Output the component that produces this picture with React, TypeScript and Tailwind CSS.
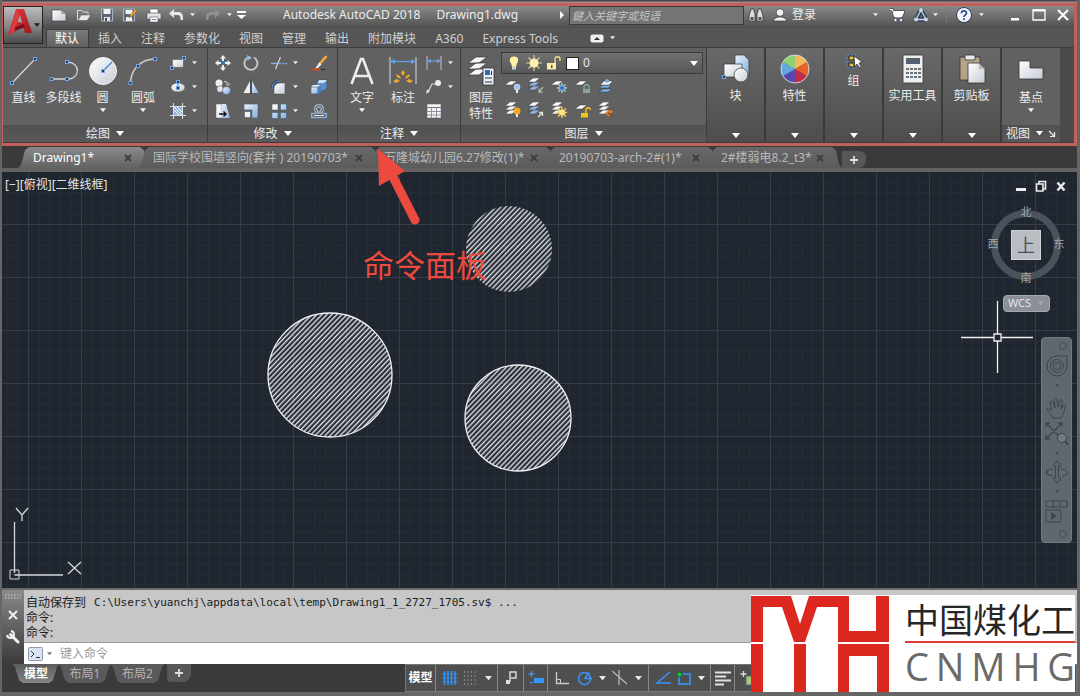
// src/App.tsx
import React from 'react';

type IconProps = { children: React.ReactNode; w?: number; h?: number; className?: string };

const Icon: React.FC<IconProps> = ({ children, w = 16, h = 16, className = '' }) => (
  <svg width={w} height={h} viewBox={`0 0 ${w} ${h}`} fill="none" aria-hidden="true" className={`shrink-0 ${className}`}>
    {children}
  </svg>
);

// Small triangle used by every drop-down
const Caret = ({ size = 6, className = 'text-[#e8e8e8]' }: { size?: number; className?: string }) => (
  <svg width={size} height={size / 2 + 1} viewBox="0 0 8 5" fill="currentColor" aria-hidden="true" className={`shrink-0 ${className}`}>
    <path d="M0 0h8L4 5z" />
  </svg>
);

const Grip = ({ x, y }: { x: number; y: number }) => (
  <rect x={x - 1.5} y={y - 1.5} width="3" height="3" fill="#2d3a4d" stroke="#6fa8ee" />
);

const Gradients = () => (
  <svg width="0" height="0" className="absolute" aria-hidden="true">
    <defs>
      <linearGradient id="paper" x1="0" y1="0" x2="1" y2="1">
        <stop offset="0" stopColor="#ffffff" />
        <stop offset="1" stopColor="#c5cbd6" />
      </linearGradient>
      <linearGradient id="steel" x1="0" y1="0" x2="1" y2="1">
        <stop offset="0" stopColor="#e9f1fb" />
        <stop offset="1" stopColor="#86aede" />
      </linearGradient>
      <linearGradient id="logoRed" x1="0" y1="0" x2="1" y2="1">
        <stop offset="0" stopColor="#e23b3f" />
        <stop offset="1" stopColor="#a1161d" />
      </linearGradient>
    </defs>
  </svg>
);

/* ---------- title bar ---------- */

const quickAccess = [
  {
    label: '新建',
    width: 'w-[25px]',
    icon: <Icon><path d="M1 3h9l5 4v7H1z" fill="url(#paper)" stroke="#333" strokeWidth=".6" /><path d="M10 3v4h5" fill="#aaa" /></Icon>,
  },
  {
    label: '打开',
    width: 'w-[23px]',
    icon: <Icon><path d="M1.500 13V3.500h4l1.500 1.500h5v3" stroke="#ddd" fill="#777" /><path d="M2 13.500 5 8h10l-4 5.500z" fill="#e8e8e8" stroke="#555" strokeWidth=".5" /></Icon>,
  },
  {
    label: '保存',
    width: 'w-[23px]',
    icon: <Icon><path d="M2.500 2h11v12h-11z" fill="#5b6676" stroke="#aab4c2" /><path d="M4.500 2h7v5h-7z" fill="#f3f3f3" /><path d="M5 10h6v4H5z" fill="#e6e6e6" /><path d="M6 11h2v3H6z" fill="#445" /></Icon>,
  },
  {
    label: '另存为',
    width: 'w-[24px]',
    icon: <Icon><path d="M1.500 2h11v12h-11z" fill="#5b6676" stroke="#aab4c2" /><path d="M3.500 3h7v4h-7zM4 10h6v4H4z" fill="#f3f3f3" /><path d="m7 11 1-3 6-6 1.500 1.500-6 6z" fill="#f0a93a" stroke="#754a12" strokeWidth=".5" /></Icon>,
  },
  {
    label: '打印',
    width: 'w-[22px]',
    icon: <Icon><path d="M4 2h8v5H4z" fill="#fff" stroke="#555" strokeWidth=".6" /><path d="M1 6h14v6H1z" fill="#dfe3ea" stroke="#4a4a4a" strokeWidth=".6" /><path d="M4 10h8v5H4z" fill="#fff" stroke="#555" strokeWidth=".6" /><path d="M5.500 12.500h5" stroke="#6f8fbd" /></Icon>,
  },
];

const UndoIcon = ({ className = '' }) => (
  <Icon className={className}>
    <path d="M6 2 1 6.500 6 11V8h3c2.500 0 3.500 1 3.500 3v2H15v-3c0-3.500-2-5-5-5H6z" fill="currentColor" />
  </Icon>
);

const TitleBar = () => (
  <header className="flex h-[22px] items-center bg-gradient-to-b from-[#8a8a8a] via-[#6d6d6d] to-[#4e4e4e] pb-1 pl-12 pr-1 text-xs text-[#ececec]">
    <div className="flex items-center">
      {quickAccess.map((q) => (
        <button key={q.label} type="button" aria-label={q.label} className={`flex ${q.width}`}>{q.icon}</button>
      ))}
      <button type="button" aria-label="放弃" className="flex w-[37px] items-center gap-1.5"><UndoIcon className="text-[#e6e6e6]" /><Caret size={5} /></button>
      <button type="button" aria-label="重做" className="flex w-8 items-center gap-1.5"><UndoIcon className="-scale-x-100 text-[#8f8f8f]" /><Caret size={5} /></button>
      <button type="button" aria-label="自定义快速访问工具栏" className="flex">
        <Icon w={10} h={9}><path d="M0 0h9v2H0zM0 4h9L4.500 8z" fill="#fff" /></Icon>
      </button>
    </div>
    <h1 className="ml-9 flex flex-1 gap-4 whitespace-nowrap">
      <span>Autodesk AutoCAD 2018</span>
      <span>Drawing1.dwg</span>
    </h1>
    <button type="button" aria-label="展开搜索" className="mr-1 flex"><Icon w={6} h={8}><path d="M1 0v8l4-4z" fill="#fff" /></Icon></button>
    <input
      aria-label="搜索"
      placeholder="鍵入关键字或短语"
      className="h-[19px] w-[175px] border border-[#3a3a3a] bg-[#747474] px-0.5 text-[11px] italic placeholder:text-[#c4c4c4]"
    />
    <div className="flex w-[326px] items-center">
      <button type="button" aria-label="查找" className="ml-1 flex w-6">
        <Icon><path d="M3 2h3v3l1 1v8H1V9zM13 2h-3v3L9 6v8h6V9z" fill="#dcdcdc" stroke="#333" strokeWidth=".8" /><path d="M7 7h2v3H7z" fill="#555" /><path d="M2.500 10h3v3h-3zM10.500 10h3v3h-3z" fill="#555" /></Icon>
      </button>
      <button type="button" className="flex items-center gap-1">
        <Icon><circle cx="8" cy="5.500" r="3.800" fill="#f2f2f2" stroke="#333" strokeWidth=".7" /><path d="M1.500 14c0-2.500 2-3 5-4h3c3 1 5 1.500 5 4z" fill="#f2f2f2" stroke="#333" strokeWidth=".7" /></Icon>
        登录
      </button>
      <button type="button" aria-label="登录选项" className="ml-auto mr-[11px] flex"><Caret size={5} /></button>
      <button type="button" aria-label="商店" className="mr-2 flex">
        <Icon><path d="M1 2.500h2.500L5.500 10h7L15 4.500H4.500" fill="#f1f1f1" stroke="#26354f" strokeWidth="2" /><path d="M1 2.500h2.500L5.500 10h7L15 4.500H4.500" fill="#fff" stroke="#fff" /><circle cx="6.500" cy="13" r="1.600" fill="#fff" stroke="#26354f" strokeWidth=".6" /><circle cx="12" cy="13" r="1.600" fill="#fff" stroke="#26354f" strokeWidth=".6" /></Icon>
      </button>
      <button type="button" aria-label="Autodesk" className="flex items-center gap-1 border-r border-[#777] pr-2">
        <Icon><path d="M8 3 13 12.500H3z" stroke="#33415a" strokeWidth="4.500" strokeLinejoin="round" /><path d="M8 3 13 12.500H3z" stroke="#cdd8ea" strokeWidth="1.300" strokeLinejoin="round" /><circle cx="8" cy="3" r="2" fill="#cdd8ea" /><circle cx="3" cy="12.500" r="2" fill="#cdd8ea" /><circle cx="13" cy="12.500" r="2" fill="#cdd8ea" /></Icon>
        <Caret size={5} />
      </button>
      <button type="button" aria-label="帮助" className="mx-2 flex items-center gap-1.5">
        <Icon w={18} h={18}><circle cx="9" cy="9" r="7.500" fill="#f0f3f8" stroke="#2b3c5b" /><path d="M6.500 7.200C6.500 4 11.500 4 11.500 7c0 1.800-2.500 2-2.500 4" stroke="#23498c" strokeWidth="1.700" /><path d="M8.100 12.200h1.800V14H8.100z" fill="#23498c" /></Icon>
        <Caret size={5} />
      </button>
      <button type="button" aria-label="最小化" className="ml-4 flex w-6"><Icon w={14} h={14}><path d="M3 10h8v2.500H3z" fill="#fff" /></Icon></button>
      <button type="button" aria-label="最大化" className="flex w-6"><Icon w={14} h={14}><path d="M1 2h12v10H1z" stroke="#fff" strokeWidth="1.300" /><path d="M1 2.500h12" stroke="#fff" strokeWidth="2" /></Icon></button>
      <button type="button" aria-label="关闭" className="flex"><Icon w={14} h={14}><path d="m2 2 10 10M12 2 2 12" stroke="#fff" strokeWidth="2.200" /></Icon></button>
    </div>
  </header>
);

const AppButton = () => (
  <button type="button" aria-label="应用程序菜单" className="absolute left-0 top-0 z-10 flex h-[38px] w-10 items-center border border-[#222] bg-gradient-to-b from-[#bdbdbd] via-[#8b8b8b] to-[#4b4b4b] pl-1">
    <Icon w={26} h={30} className="-mt-2">
      <path d="M8 3h8l8 24h-7l-2-6-6-1-2 6-7 3z" fill="url(#logoRed)" />
      <path d="M12 9 9.500 16l4.500.500z" fill="#a7a7a7" />
      <path d="M8 3 1 29l5-3 6-17z" fill="#e04a4c" opacity=".6" />
      <path d="m7 21 9-3 1 3-10 4z" fill="#7f1016" />
    </Icon>
    <Caret size={6} className="text-[#222]" />
  </button>
);

/* ---------- ribbon ---------- */

const ribbonTabs = ['默认', '插入', '注释', '参数化', '视图', '管理', '输出', '附加模块', 'A360', 'Express Tools'];

const RibbonTabs = () => (
  <nav className="flex h-[19px] items-end bg-[#555555] pl-[43px] text-xs text-[#d0d0d0]">
    {ribbonTabs.map((t, i) => (
      <button
        key={t}
        type="button"
        className={`h-[18px] whitespace-nowrap pl-2 pr-[9px] leading-4 ${i === 0 ? 'border border-b-0 border-[#3c3c3c] bg-gradient-to-b from-[#7a7a7a] to-[#616161] text-white' : 'border border-b-0 border-transparent'}`}
      >
        {t}
      </button>
    ))}
    <button type="button" aria-label="最小化功能区" className="ml-[22px] flex h-[18px] items-center gap-1.5">
      <Icon w={14} h={9}><rect x=".5" y=".5" width="13" height="8" rx="2" fill="#f0f0f0" /><path d="M4 6h6L7 3z" fill="#333" /></Icon>
      <Caret size={5} />
    </button>
  </nav>
);

const BigTool = ({ label, icon, width, drop }: { label: string; icon: React.ReactNode; width: string; drop?: boolean }) => (
  <button type="button" className={`flex flex-col items-center pt-2 ${width}`}>
    {icon}
    <span className="mt-1 whitespace-nowrap leading-4">{label}</span>
    {drop && <Caret size={6} className="mt-0.5 text-white" />}
  </button>
);

const SmallTool = ({ label, icon, drop }: { label: string; icon: React.ReactNode; drop?: boolean }) => (
  <button type="button" aria-label={label} className="flex h-6 items-center gap-1.5">
    {icon}
    {drop && <Caret size={5} />}
  </button>
);

const Panel = ({ title, width, children }: { title: string; width: string; children: React.ReactNode }) => (
  <section className={`flex flex-col border-r border-[#3d3d3d] ${width}`}>
    <div className="flex flex-1 items-start bg-[#616161]">{children}</div>
    <button type="button" className="flex h-[17px] items-center justify-center gap-1.5 bg-gradient-to-b from-[#505050] to-[#5a5a5a] leading-4">
      {title}
      <Caret size={8} className="text-white" />
    </button>
  </section>
);

const DrawPanel = () => (
  <Panel title="绘图" width="w-[205px]">
    <BigTool label="直线" width="w-[41px]" icon={<Icon w={30} h={30}><path d="M3 27 26 3" stroke="#d5d5d5" strokeWidth="1.300" /><Grip x={3} y={27} /><Grip x={26} y={3} /></Icon>} />
    <BigTool label="多段线" width="w-[39px]" icon={<Icon w={30} h={30}><path d="M2 23h18c12-1 11-17-2-17" stroke="#d5d5d5" strokeWidth="1.300" /><Grip x={2.5} y={23} /><Grip x={18} y={23} /><Grip x={18} y={6} /></Icon>} />
    <BigTool label="圆" drop width="w-[39px]" icon={<Icon w={30} h={30}><circle cx="15" cy="15" r="13.500" fill="url(#paper)" stroke="#f5f5f5" /><path d="m15 15 9-9" stroke="#3f80cf" strokeWidth="1.300" /><Grip x={15} y={15} /></Icon>} />
    <BigTool label="圆弧" drop width="w-[42px]" icon={<Icon w={30} h={30}><path d="M2.500 27C3 13 13 3 27 3" stroke="#cfcfcf" strokeWidth="1.500" /><Grip x={2.5} y={27} /><Grip x={10} y={10} /><Grip x={27} y={3} /></Icon>} />
    <div className="flex flex-col pl-1.5 pt-[3px]">
      <SmallTool drop label="矩形" icon={<Icon><path d="M2.500 4.500h11v8h-11z" fill="url(#paper)" stroke="#444" strokeWidth=".5" /><Grip x={2} y={13} /><Grip x={14} y={3} /></Icon>} />
      <SmallTool drop label="椭圆" icon={<Icon><ellipse cx="8" cy="8.500" rx="7" ry="4.500" fill="url(#paper)" stroke="#444" strokeWidth=".5" /><path d="M8 8.500V4" stroke="#3f80cf" /><Grip x={8} y={3} /><Grip x={8} y={9} /></Icon>} />
      <SmallTool drop label="图案填充" icon={<Icon><path d="M3.500 0v16M12.500 0v16M0 3.500h16M0 12.500h16" stroke="#dedede" /><path d="M4 4h8v8H4z" fill="#8db4e4" /><path d="m4 7 5 5M4 4l8 8M7 4l5 5" stroke="#fff" /></Icon>} />
    </div>
  </Panel>
);

const modifyTools: { label: string; drop?: boolean; icon: React.ReactNode }[] = [
  { label: '移动', icon: <Icon><path d="M8 0 5 3.500h2V7H3.500V5L0 8l3.500 3V9H7v3.500H5L8 16l3-3.500H9V9h3.500v2L16 8l-3.500-3v2H9V3.500h2z" fill="#f0f0f0" /><path d="M6 6h4v4H6z" fill="#3e6fae" /></Icon> },
  { label: '旋转', icon: <Icon><path d="M5 2.500A6.500 6.500 0 1 0 11 2.600" stroke="#c9c9c9" strokeWidth="1.800" /><path d="m4 0 5 2.500L4.500 6z" fill="#8db8ee" /></Icon> },
  { label: '修剪', drop: true, icon: <Icon><path d="M0 8.500h7" stroke="#8db8ee" strokeWidth="1.400" /><path d="M8 8.500h8" stroke="#6fa8ee" strokeWidth="1.400" strokeDasharray="2 1" /><path d="m4.500 14 5-12" stroke="#d0d0d0" strokeWidth="1.300" /></Icon> },
  { label: '删除', icon: <Icon><path d="M15.500 1 8 9.500" stroke="#f0ab3c" strokeWidth="2.600" /><path d="m8.500 7.500 2 2L7 13l-3 .5z" fill="#eee" /><path d="M1 14.500h8" stroke="#d94920" strokeWidth="2" /><path d="M10 14.500h4" stroke="#222" /></Icon> },
  { label: '复制', icon: <Icon><circle cx="4" cy="4" r="3.500" fill="#f0f0f0" /><circle cx="5" cy="10" r="3.200" fill="#e2e7ef" stroke="#555" strokeWidth=".5" /><circle cx="11.500" cy="11.500" r="4" fill="url(#steel)" stroke="#356" strokeWidth=".5" /><path d="M9 2.500c3 0 4 1 4 3M11 4.500l2 2 2-2" stroke="#ddd" /></Icon> },
  { label: '镜像', icon: <Icon><path d="M7 2v12H.5z" fill="#efefef" /><path d="M9 2v12h6.500z" fill="url(#steel)" /><path d="M8 0v16" stroke="#3d3d3d" /></Icon> },
  { label: '圆角', drop: true, icon: <Icon><path d="M3 15V9c0-3 3-5 6-5h5v11z" fill="url(#paper)" stroke="#444" strokeWidth=".5" /><path d="M1 10c0-5 3-8 8-8" stroke="#253a5c" strokeWidth="2.500" /><path d="M1 10c0-5 3-8 8-8" stroke="#7aaee8" /></Icon> },
  { label: '分解', icon: <Icon><path d="m5 4 3-3h8v8l-3 3H5z" fill="#5f8fc9" stroke="#2f4a6d" strokeWidth=".7" /><path d="m8 1-1 3h6l3-3z" fill="#cfe0f5" /><path d="m0 8 2-2h7l-2 2z" fill="#eef4fc" /><path d="M0 8h7v7H0z" fill="url(#steel)" stroke="#2f4a6d" strokeWidth=".6" /><path d="m7 8 3-2v7l-3 2z" fill="#4f7fb8" /></Icon> },
  { label: '拉伸', icon: <Icon><path d="M1 1h6v14H1z" fill="#f4f4f4" stroke="#555" strokeWidth=".5" /><path d="M7 1h4l4 14H7z" fill="url(#steel)" /><path d="M4 11h7M8.500 8.500 11 11l-2.500 2.500" stroke="#111" strokeWidth="1.300" /></Icon> },
  { label: '缩放', icon: <Icon><path d="M1 1h14v14H9V7H1z" fill="url(#steel)" stroke="#456" strokeWidth=".6" /><path d="M1.500 8.500h6v6h-6z" fill="#f2f2f2" stroke="#456" strokeWidth=".6" /></Icon> },
  { label: '阵列', drop: true, icon: <Icon><path d="M1 1h6v6H1z" fill="#f5f5f5" stroke="#456" strokeWidth=".5" /><path d="M9.500 1h6v6h-6zM1 9.500h6v6H1zM9.500 9.500h6v6h-6z" fill="url(#steel)" stroke="#356" strokeWidth=".5" /></Icon> },
  { label: '偏移', icon: <Icon><path d="M.7 14.500h14.600v-4H11V9c3-3 1-7.500-3-7.500S2 6 5 9v1.500H.7z" stroke="#89aed8" strokeWidth="1.400" /><path d="M3 12.500h10M7 11V8C4.500 6 6 4 8 4s3.500 2 1 4v3" stroke="#e0e0e0" /></Icon> },
];

const ModifyPanel = () => (
  <Panel title="修改" width="w-[130px]">
    <div className="grid grid-cols-[28px_28px_40px_16px] pl-[7px] pt-[3px]">
      {modifyTools.map((t) => <SmallTool key={t.label} {...t} />)}
    </div>
  </Panel>
);

const AnnotatePanel = () => (
  <Panel title="注释" width="w-[123px]">
    <BigTool label="文字" drop width="w-12" icon={<Icon w={30} h={30}><path d="M4.500 28 14 3h2l9.500 25M8 20h14" stroke="#ededed" strokeWidth="2.600" /></Icon>} />
    <BigTool
      label="标注"
      width="w-[34px]"
      icon={<Icon w={30} h={30}><path d="M2 1v27M28 1v27" stroke="#bdbdbd" strokeWidth="1.300" /><path d="M3 5.500h24" stroke="#62a1ee" strokeWidth="1.300" /><path d="M2 5.500 7 3v5zM28 5.500 23 3v5z" fill="#62a1ee" /><path d="m15 14 2 3-2 3-2-3zM8 18l4 2 1 3-4-2zM22 18l-4 2-1 3 4-2zM5 25l4-2 3 2-4 2zM25 25l-4-2-3 2 4 2z" fill="#f0a92e" /></Icon>}
    />
    <div className="flex flex-col pl-1.5 pt-[3px]">
      <SmallTool drop label="线性" icon={<Icon><path d="M1 1v14M15 1v14" stroke="#c4c4c4" /><path d="M2 6h12" stroke="#6fa8ee" /><path d="M1 6l4-2v4zM15 6l-4-2v4z" fill="#6fa8ee" /></Icon>} />
      <SmallTool drop label="引线" icon={<Icon><path d="M2 13 6 5h5" stroke="#dcdcdc" strokeWidth="1.200" /><path d="m0 15 1-4.500 3 1.500z" fill="#e8e8e8" /><circle cx="12" cy="4" r="3" fill="#eee" /></Icon>} />
      <SmallTool label="表格" icon={<Icon><path d="M1 1h14v14H1z" fill="#f4f4f4" stroke="#555" strokeWidth=".5" /><path d="M1 4.500h14" stroke="#777" /><path d="M1 8.500h14M1 12h14M5.500 5v10M10.500 5v10" stroke="#8a93a3" /></Icon>} />
    </div>
  </Panel>
);

// Stacked sheets shared by the layer commands
const Sheets = ({ n = 3, fill = '#f4f4f4' }: { n?: number; fill?: string }) => (
  <>
    {n > 2 && <path d="m0 12 5-4h7l-5 4z" fill={fill} stroke="#444" strokeWidth=".6" />}
    {n > 1 && <path d="m0 8 5-4h7L7 8z" fill={fill} stroke="#444" strokeWidth=".6" />}
    <path d="m0 4 5-4h7L7 4z" fill="#fff" stroke="#444" strokeWidth=".6" transform={n === 1 ? 'translate(0 3)' : undefined} />
  </>
);

const layerTools = [
  { label: '关', icon: <Icon><Sheets n={1} /><circle cx="12" cy="9" r="3" fill="#9cc3ef" stroke="#fff" strokeWidth=".5" /><path d="M11 12h2v3h-2z" fill="#eee" /></Icon> },
  { label: '隔离', icon: <Icon><Sheets fill="#8db4e4" /><path d="m15 9-4 5M11 10.500V14h3.500" stroke="#a9b7b0" strokeWidth="1.300" /></Icon> },
  { label: '冻结', icon: <Icon><Sheets n={1} /><path d="M11 5v10M6 10h10M7.500 6.500l7 7M14.500 6.500l-7 7" stroke="#a8cff5" strokeWidth="1.400" /><circle cx="11" cy="10" r="2" fill="#2f6fb5" /></Icon> },
  { label: '锁定', icon: <Icon><Sheets n={1} /><path d="M9 11V9c0-3 5-3 5 0v2" stroke="#86a597" strokeWidth="1.400" /><path d="M8 11h7v4H8z" fill="#86a597" /></Icon> },
  { label: '置为当前', icon: <Icon><path d="m1 14 4-3h9l-4 3zM1 10l4-3h9l-4 3z" fill="#7fb0e8" stroke="#333" strokeWidth=".5" /><path d="m2 7 4-4h9l-4 4z" fill="#f4f4f4" stroke="#333" strokeWidth=".5" /><circle cx="9" cy="3" r="2" fill="#7fb0e8" /></Icon> },
  { label: '打开所有图层', icon: <Icon><Sheets /><circle cx="12" cy="9" r="3.500" fill="#f5a62a" /><path d="M11 12h2v3h-2z" fill="#eee" /></Icon> },
  { label: '取消隔离', icon: <Icon><Sheets fill="#8db4e4" /><path d="m10 15 4-4M11 10.500h3.500V14" stroke="#e0e0e0" strokeWidth="1.300" /></Icon> },
  { label: '解冻所有图层', icon: <Icon><Sheets /><path d="M11 5v11M5.500 10.500h10.500M7 6.500l8 8M15 6.500l-8 8" stroke="#f6cf57" strokeWidth="1.400" /><circle cx="11" cy="10.500" r="3" fill="#ffe382" /></Icon> },
  { label: '解锁', icon: <Icon><Sheets n={1} /><path d="M11 11V8c0-3 4-3 4.500 0" stroke="#f2c51e" strokeWidth="1.400" /><path d="M6 11h7v4.500H6z" fill="#f2c51e" /></Icon> },
  { label: '匹配图层', icon: <Icon><Sheets /><path d="m7 11 4-3 4 1-4 6z" fill="#e17d2c" /><path d="m10 11 5 3" stroke="#8a4b1c" strokeWidth="1.500" /></Icon> },
];

const LayerPanel = () => (
  <Panel title="图层" width="w-[246px]">
    <button type="button" className="flex w-10 flex-col items-center pt-2 leading-4">
      <Icon w={30} h={30}>
        <path d="m2 19 8-6h11l-8 6zM2 13l8-6h11l-8 6zM2 7l8-6h11l-8 6z" fill="#f5f5f5" stroke="#333" strokeWidth=".7" />
        <path d="M17 12h11v17H17z" fill="#e9eef6" stroke="#333" strokeWidth=".8" />
        <path d="M19 14h5v5h-5z" fill="#3469b3" /><path d="M25.500 15v4M19 22h7M19 26h7" stroke="#27364e" />
      </Icon>
      <span className="mt-1">图层<br />特性</span>
    </button>
    <div className="flex-1 pr-[3px] pt-1">
      <div className="flex h-[22px] items-center gap-1 border border-[#3a3a3a] bg-gradient-to-b from-[#717171] to-[#575757] px-1">
        <Icon><path d="M8 1.500c-5 0-5 5-2.500 7.500v2h5V9c2.500-2.500 2.500-7.500-2.500-7.500" fill="#fff1a3" /><path d="M6 11h4v3.500H6z" fill="#d2d2d2" /></Icon>
        <Icon><path d="M8 0v16M0 8h16M2.500 2.500l11 11M13.500 2.500l-11 11" stroke="#d7cf9f" strokeWidth="1.200" /><circle cx="8" cy="8" r="4.500" fill="#ffeeb0" /></Icon>
        <Icon><path d="M9 8V4c0-3 5-3 5 0v2" stroke="#e5d989" strokeWidth="1.400" /><path d="M1 8h9v6.500H1z" fill="#fdeea4" /><path d="M5 10h1.500v3H5z" fill="#555" /></Icon>
        <span className="h-[13px] w-[13px] border border-[#222] bg-white" />
        <select aria-label="图层" className="flex-1 appearance-none bg-transparent text-xs leading-4"><option>0</option></select>
        <Caret size={8} className="text-white" />
      </div>
      <div className="grid w-[120px] grid-cols-5 pl-1">
        {layerTools.map((t) => <SmallTool key={t.label} {...t} />)}
      </div>
    </div>
  </Panel>
);

const collapsedPanels = [
  {
    label: '块',
    icon: <Icon w={30} h={30}><path d="M14 1h9l5 5v15H14z" fill="url(#steel)" stroke="#333" strokeWidth=".7" /><path d="M3 10h18v13H3z" fill="url(#paper)" stroke="#333" strokeWidth=".7" /><circle cx="20" cy="21" r="7" fill="url(#paper)" stroke="#333" strokeWidth=".7" /><Grip x={3} y={23} /></Icon>,
  },
  {
    label: '特性',
    icon: <Icon w={30} h={30}><path d="M15 15V1a14 14 0 0 1 12 7z" fill="#f5b95c" /><path d="M15 15 27 8a14 14 0 0 1 0 14z" fill="#e5622b" /><path d="m15 15 12 7a14 14 0 0 1-12 7z" fill="#c22b4b" /><path d="M15 15v14a14 14 0 0 1-12-7z" fill="#5648ad" /><path d="M15 15 3 22A14 14 0 0 1 3 8z" fill="#62a7df" /><path d="M15 15 3 8a14 14 0 0 1 12-7z" fill="#8fd070" /><circle cx="15" cy="15" r="14" stroke="#eee" strokeWidth=".8" /></Icon>,
  },
  {
    label: '组',
    icon: <Icon h={15}><path d="M3 2h5v4H3zM3 9h5v4H3z" fill="#e0c345" stroke="#223" /><path d="M1 1h9v13H1z" stroke="#4f8ee0" strokeDasharray="2 2" /><path d="m8 2 1 11 2-3 3 4 1-1-2-4 3-1z" fill="#fff" stroke="#222" strokeWidth=".6" /></Icon>,
  },
  {
    label: '实用工具',
    icon: <Icon w={30} h={30}><path d="M5 1h20v28H5z" fill="#eeeeee" stroke="#333" strokeWidth=".8" /><path d="M8 4h14v6H8z" fill="#536272" /><path d="M8 14h3v2H8zM12 14h3v2h-3zM16 14h3v2h-3zM20 14h3v2h-3zM8 18h3v2H8zM12 18h3v2h-3zM16 18h3v2h-3zM20 18h3v2h-3zM8 22h3v2H8zM12 22h3v2h-3zM16 22h3v2h-3zM20 22h3v2h-3z" fill="#6b7580" /></Icon>,
  },
  {
    label: '剪贴板',
    icon: <Icon w={30} h={30}><path d="M3 3h20v23H3z" fill="#b6a486" stroke="#333" strokeWidth=".8" /><path d="M8 1h10v5H8z" fill="#e8e8e8" stroke="#333" strokeWidth=".8" /><path d="M11 9h11l6 6v14H11z" fill="url(#paper)" stroke="#333" strokeWidth=".8" /><path d="M22 9v6h6z" fill="#b8b8b8" /></Icon>,
  },
];

const Ribbon = () => (
  <div className="flex h-24 border-y border-[#3d3d3d] bg-[#4a4a4a] text-xs text-[#ececec]">
    <DrawPanel />
    <ModifyPanel />
    <AnnotatePanel />
    <LayerPanel />
    <div className="flex gap-0.5 bg-[#3b3b3b]">
      {collapsedPanels.map((p) => (
        <button key={p.label} type="button" className="flex w-[57px] flex-col items-center bg-gradient-to-b from-[#696969] to-[#4d4d4d] pt-1.5 leading-4">
          {p.icon}
          <span className="mt-1 whitespace-nowrap">{p.label}</span>
          <Caret size={8} className="mb-1 mt-auto text-white" />
        </button>
      ))}
      <section className="flex w-[58px] flex-col bg-[#616161]">
        <div className="flex flex-1 justify-center">
          <BigTool drop label="基点" width="w-12" icon={<Icon w={30} h={30}><path d="M3 5h11v7h13v11H3z" fill="url(#paper)" stroke="#333" strokeWidth=".8" /></Icon>} />
        </div>
        <div className="flex h-[17px] items-center justify-between bg-gradient-to-b from-[#505050] to-[#5a5a5a] px-1 leading-4">
          <button type="button" className="flex items-center gap-1.5">视图<Caret size={7} className="text-white" /></button>
          <button type="button" aria-label="视图设置" className="flex"><Icon w={8} h={8}><path d="m1 1 5 5M6.500 2v4.500H2" stroke="#eee" strokeWidth="1.200" /></Icon></button>
        </div>
      </section>
    </div>
  </div>
);

/* ---------- drawing tabs ---------- */

const fileTabs = [
  { name: 'Drawing1*', width: 'w-[132px]' },
  { name: '国际学校围墙竖向(套井 ) 20190703*', width: 'w-[243px]' },
  { name: '万隆城幼儿园6.27修改(1)*', width: 'w-[187px]' },
  { name: '20190703-arch-2#(1)*', width: 'w-[174px]' },
  { name: '2#楼弱电8.2_t3*', width: 'w-[136px]' },
];

const FileTabs = () => (
  <nav className="flex h-[26px] items-end border-b-4 border-[#626262] bg-[#3a3a3a] pl-4 text-xs">
    {fileTabs.map((t, i) => (
      <div
        key={t.name}
        className={`-mr-3 flex h-[21px] items-center justify-between pl-[15px] pr-[18px] [clip-path:polygon(0_100%,3px_85%,7px_15%,11px_0,calc(100%-10px)_0,calc(100%-6px)_15%,calc(100%-3px)_85%,100%_100%)] ${t.width} ${i === 0 ? 'bg-gradient-to-b from-[#8a8a8a] to-[#636363] text-white' : 'bg-gradient-to-b from-[#686868] to-[#5b5b5b] text-[#b9b9b9]'}`}
      >
        <button type="button" className="whitespace-nowrap leading-5">{t.name}</button>
        <button type="button" aria-label={`关闭 ${t.name}`} className="flex"><Icon w={8} h={8}><path d="m1 1 6 6M7 1 1 7" stroke="#3d3d3d" strokeWidth="1.800" /></Icon></button>
      </div>
    ))}
    <button type="button" aria-label="新图形" className="ml-3 flex h-[17px] w-6 items-center justify-center rounded-br-lg rounded-tr-md bg-[#575757]">
      <Icon w={8} h={8}><path d="M4 0v8M0 4h8" stroke="#ddd" strokeWidth="1.800" /></Icon>
    </button>
  </nav>
);

/* ---------- drawing area ---------- */

const Drawing = () => (
  <svg className="absolute inset-0 h-full w-full" aria-hidden="true">
    <defs>
      <pattern id="minor" width="10.6" height="10.6" x="26" y="52" patternUnits="userSpaceOnUse">
        <path d="M0 .5h10.600M.5 0v10.600" stroke="#252d38" />
      </pattern>
      <pattern id="major" width="53" height="53" x="26" y="52" patternUnits="userSpaceOnUse">
        <path d="M0 .5h53M.5 0v53" stroke="#343d48" />
      </pattern>
      <pattern id="hatch" width="3.6" height="3.6" patternUnits="userSpaceOnUse" patternTransform="rotate(-46)">
        <path d="M0 1.500h4" stroke="#e2e4e7" strokeWidth="1.400" />
      </pattern>
    </defs>
    <rect width="100%" height="100%" fill="#20262f" />
    <rect width="100%" height="100%" fill="url(#minor)" />
    <rect width="100%" height="100%" fill="url(#major)" />
    <circle cx="328" cy="203" r="62" fill="url(#hatch)" stroke="#f2f2f2" strokeWidth="1.300" />
    <circle cx="516" cy="246" r="53" fill="url(#hatch)" stroke="#f2f2f2" strokeWidth="1.300" />
    <circle cx="507" cy="77" r="43" fill="url(#hatch)" />
  </svg>
);

const ViewCube = () => (
  <div className="absolute right-3 top-8 grid w-[78px] grid-cols-[12px_54px_12px] grid-rows-[15px_51px_15px] place-items-center text-[11px] text-[#a3a6ab]">
    <svg className="absolute left-[3px] top-[5px]" width="72" height="72" fill="none" aria-hidden="true"><circle cx="36" cy="36" r="31.500" stroke="#4c525c" strokeWidth="7" /></svg>
    <span className="relative col-start-2 leading-4">北</span>
    <span className="relative col-start-1">西</span>
    <button type="button" className="relative h-[30px] w-[30px] border border-[#d0d2d6] bg-[#b9bdc3] text-lg leading-7 text-[#4d525a]">上</button>
    <span className="relative">东</span>
    <span className="relative col-start-2 leading-4">南</span>
  </div>
);

const navTools = [
  { label: '全导航控制盘', h: 'h-[42px]', icon: <Icon w={24} h={24}><path d="M12 2h10v10a10 10 0 1 1-10-10z" stroke="currentColor" /><circle cx="12" cy="12" r="6.500" stroke="currentColor" /><rect x="8.500" y="8.500" width="7" height="7" rx="2" stroke="currentColor" /></Icon>, drop: true },
  { label: '平移', h: 'h-[26px]', icon: <Icon w={24} h={24}><path d="M8 22c-2-4-5-7-6-9 1-2 3 0 5 2L5 6c1-2 2-1 3 1l2 5-1-9c1-2 3-1 3 1l1 7 2-7c1-1 3 0 2 2l-1 7 3-4c2 0 2 1 1 3-1 4-2 7-4 10z" stroke="currentColor" /></Icon> },
  { label: '范围缩放', h: 'h-[38px]', icon: <Icon w={24} h={24}><path d="m2 2 14 14M16 2 2 16M1 5V1h4M17 5V1h-4M1 13v4h4" stroke="currentColor" strokeWidth="1.300" /><circle cx="17" cy="16" r="4.500" fill="#727a80" stroke="currentColor" /><path d="m20 19 3 4" stroke="currentColor" strokeWidth="2" /></Icon>, drop: true },
  { label: '动态观察', h: 'h-[40px]', icon: <Icon w={24} h={24}><path d="M12 1 8 6h2.500v12H8l4 5 4-5h-2.500V6H16z" stroke="currentColor" /><path d="M8 9c-8 1-8 6 0 7M16 9c9 1 8 6 1 7M2 10l-1 4 4 1" stroke="currentColor" /></Icon>, drop: true },
  { label: 'ShowMotion', h: 'h-[28px]', icon: <Icon w={24} h={24}><path d="M1 1h21v6H1zM1 10h15v12H1zM8 1v6M15 1v6" stroke="currentColor" /><path d="m6 12 6 4-6 4z" fill="currentColor" /></Icon> },
];

const NavBar = () => (
  <div className="absolute right-[5px] top-[165px] flex h-[206px] w-[31px] flex-col items-center rounded border border-[#737b82] bg-[#5f686e] pt-4 text-[#3d444b]">
    {navTools.map((n) => (
      <button key={n.label} type="button" aria-label={n.label} className={`flex flex-col items-center ${n.h}`}>
        {n.icon}
        {n.drop && <Caret size={4} className="mt-1.5 text-[#3d444b]" />}
      </button>
    ))}
    <span className="absolute right-1 top-1 h-2 w-2 rounded-full border border-[#454c53]" />
    <span className="absolute bottom-1 right-1 h-2 w-2 rounded-full border border-[#454c53]" />
  </div>
);

const Canvas = () => (
  <main className="relative min-h-[380px] flex-1 overflow-hidden bg-[#20262f]">
    <Drawing />
    <button type="button" className="absolute left-[3px] top-[5px] whitespace-nowrap text-xs text-[#e4e4e4]">[−][俯视][二维线框]</button>
    <div className="absolute right-2.5 top-2 flex gap-2">
      <button type="button" aria-label="最小化图形" className="flex"><Icon w={12} h={12}><path d="M1 8h10v3H1z" fill="#eee" /></Icon></button>
      <button type="button" aria-label="还原图形" className="flex"><Icon w={12} h={12}><path d="M4 4V1.500h6.500V9H8M1.500 4H8v7H1.500z" stroke="#eee" strokeWidth="1.600" /></Icon></button>
      <button type="button" aria-label="关闭图形" className="flex"><Icon w={12} h={12}><path d="m2.500 2.500 7 8M9.500 2.500l-7 8" stroke="#eee" strokeWidth="2.400" /></Icon></button>
    </div>
    <ViewCube />
    <button type="button" className="absolute right-[27px] top-[123px] flex h-[17px] w-[47px] items-center gap-1.5 rounded border border-[#a3a8b1] bg-[#8a8f99] pl-1 text-[11px] text-[#e3e5ea]">
      WCS<Caret size={7} className="text-[#9fa4ad]" />
    </button>
    <svg className="absolute right-11 top-[129px]" width="72" height="72" fill="none" aria-hidden="true">
      <path d="M36.500 0v33M36.500 40v32M0 36.500h33M40 36.500h32M33 33h7v7h-7z" stroke="#f0f0f0" strokeWidth="1.300" />
    </svg>
    <NavBar />
    <svg className="absolute bottom-1 left-1.5" width="78" height="80" fill="none" stroke="#d5d7da" aria-hidden="true">
      <path d="M6.500 69V18M6.500 71H55" strokeWidth="1.300" /><path d="M2 66h9v9H2z" />
      <path d="m8 4 6 7 6-7M14 11v6M60 58l13 12M73 58 60 70" strokeWidth="1.300" />
    </svg>
  </main>
);

/* ---------- command window and status bar ---------- */

const CommandWindow = () => (
  <section className="flex h-[76px] border-t-2 border-[#6b6b6b]">
    <div className="flex w-[22px] flex-col items-center gap-2.5 bg-gradient-to-b from-[#8a8a8a] to-[#3b3b3b] pt-1">
      <Icon w={18} h={6}><path d="M1 1h16M1 4h16" stroke="#bbb" strokeWidth="1.500" strokeDasharray="1.500 1.500" /></Icon>
      <button type="button" aria-label="关闭命令行" className="flex"><Icon w={10} h={10}><path d="m1 1 8 8M9 1 1 9" stroke="#f2f2f2" strokeWidth="2" /></Icon></button>
      <button type="button" aria-label="自定义" className="flex"><Icon w={14} h={14}><path d="M4.500 4.500 12 12" stroke="#f2f2f2" strokeWidth="3" strokeLinecap="round" /><path d="M5 1a3.500 3.500 0 1 1-4 4" stroke="#f2f2f2" strokeWidth="2" /></Icon></button>
    </div>
    <div className="flex flex-1 flex-col">
      <div className="flex-1 bg-[#c7c7c7] pl-0.5 pt-[5px] text-xs leading-[15px] text-[#202020]">
        <p className="flex gap-2 whitespace-nowrap">
          <span>自动保存到</span>
          <span className="font-['DejaVu_Sans_Mono','Liberation_Mono',monospace] text-[11px]">C:\Users\yuanchj\appdata\local\temp\Drawing1_1_2727_1705.sv$ ...</span>
        </p>
        <p>命令:</p>
        <p>命令:</p>
      </div>
      <div className="flex h-[22px] items-center gap-1 border-t border-[#999] bg-white pl-1">
        <button type="button" aria-label="最近使用的命令" className="flex items-center gap-1">
          <Icon w={15} h={14}><rect x=".5" y=".5" width="14" height="13" rx="1" fill="#dbe4ef" stroke="#8b9bb0" /><path d="m3 4 3 3-3 3M8 10.500h4" stroke="#25344d" /></Icon>
          <Caret size={5} className="text-[#777]" />
        </button>
        <input aria-label="命令" placeholder="键入命令" className="ml-1 flex-1 bg-transparent text-xs text-[#222] placeholder:text-[#9a9a9a]" />
      </div>
    </div>
  </section>
);

const layoutTabs = [
  { name: '模型', width: 'w-12' },
  { name: '布局1', width: 'w-[54px]' },
  { name: '布局2', width: 'w-[55px]' },
];

const LayoutTabs = () => (
  <nav className="flex flex-1 items-start pl-2.5 text-xs">
    {layoutTabs.map((t, i) => (
      <button
        key={t.name}
        type="button"
        className={`-mr-0.5 h-[19px] leading-[19px] [clip-path:polygon(0_0,100%_0,calc(100%-3px)_15%,calc(100%-7px)_85%,calc(100%-11px)_100%,11px_100%,7px_85%,3px_15%)] ${t.width} ${i === 0 ? 'bg-gradient-to-b from-[#5c5c5c] to-[#858585] font-bold text-white' : 'bg-[#5a5a5a] text-[#b5b5b5]'}`}
      >
        {t.name}
      </button>
    ))}
    <button type="button" aria-label="新建布局" className="ml-1 flex h-[18px] w-6 items-center justify-center rounded-bl rounded-br-lg bg-[#575757]">
      <Icon w={8} h={8}><path d="M4 0v8M0 4h8" stroke="#ddd" strokeWidth="1.800" /></Icon>
    </button>
  </nav>
);

const StatusCell = ({ width, children }: { width: string; children: React.ReactNode }) => (
  <div className={`flex items-center justify-evenly border-r border-[#888] ${width}`}>{children}</div>
);

const StatusButton = ({ label, children }: { label: string; children: React.ReactNode }) => (
  <button type="button" aria-label={label} className="flex items-center"><Icon>{children}</Icon></button>
);

const StatusBar = () => (
  <div className="flex w-[672px] border border-[#777] bg-[#4f4f4f] text-white">
    <StatusCell width="w-[30px]"><button type="button" className="whitespace-nowrap text-xs font-bold">模型</button></StatusCell>
    <StatusCell width="w-[62px]">
      <StatusButton label="显示图形栅格"><path d="M2.500 1v14M6 1v14M9.500 1v14M13 1v14" stroke="#3596ff" strokeWidth="1.500" /><path d="M0 4h16M0 8h16M0 12h16" stroke="#3596ff" strokeWidth=".7" /></StatusButton>
      <StatusButton label="捕捉模式"><path d="M1 2h14M1 6h14M1 10h14M1 14h14" stroke="#bbb" strokeDasharray="1 2.500" /></StatusButton>
      <Caret size={7} />
    </StatusCell>
    <StatusCell width="w-[26px]"><StatusButton label="推断约束"><path d="M7 12V2h6v6H8" stroke="#ddd" strokeWidth="1.400" /><path d="M3 10h4v4H3z" fill="#ddd" /></StatusButton></StatusCell>
    <StatusCell width="w-6"><StatusButton label="动态输入"><path d="M3.500 1v6M.5 4h6" stroke="#3596ff" strokeWidth="1.300" /><path d="M6 8h10v5H6z" fill="#3596ff" /><path d="M2 12.500h3" stroke="#3596ff" /></StatusButton></StatusCell>
    <StatusCell width="w-[101px]">
      <StatusButton label="正交"><path d="M2.500 2v11.500H15" stroke="#ccc" strokeWidth="1.300" /><path d="M2.500 9.500h4v4" stroke="#ccc" /></StatusButton>
      <StatusButton label="极轴追踪"><circle cx="7.500" cy="8.500" r="6" stroke="#3596ff" strokeWidth="1.500" /><path d="m7.500 8.500 5-6M7.500 8.500H15" stroke="#3596ff" strokeWidth="1.500" /></StatusButton>
      <Caret size={7} />
      <StatusButton label="等轴测草图"><path d="m0 1 15 13M7 0v15" stroke="#bbb" strokeWidth="1.200" /></StatusButton>
      <Caret size={7} />
    </StatusCell>
    <StatusCell width="w-[62px]">
      <StatusButton label="对象捕捉追踪"><path d="M15 2 2 13h14" stroke="#3596ff" strokeWidth="1.600" /></StatusButton>
      <StatusButton label="对象捕捉"><path d="M3 4h11v10H3z" stroke="#3596ff" strokeWidth="1.600" /><circle cx="3.500" cy="4.500" r="2.500" fill="#2bbf3d" stroke="#063" /></StatusButton>
      <Caret size={7} />
    </StatusCell>
    <StatusCell width="w-6"><StatusButton label="线宽"><path d="M0 2.500h16M0 6.500h11M0 10.500h16M0 14.500h9" stroke="#e1e1e1" strokeWidth="2" /></StatusButton></StatusCell>
    <StatusCell width="w-[26px]"><StatusButton label="选择循环"><path d="M3.500 1v6M.5 4h6" stroke="#ddd" strokeWidth="1.300" /><path d="M6 6h9v9H6z" fill="#a8c779" stroke="#567" /></StatusButton></StatusCell>
  </div>
);

/* ---------- overlays ---------- */

const BrandMark = () => (
  <aside className="absolute bottom-0 right-0.5 flex h-[97px] w-[324px] overflow-hidden bg-white">
    <svg width="138" height="97" fill="#dc281e" role="img" aria-label="CNMHG" className="shrink-0">
      <path d="M0 1h40l9 28 9-28h40v35h27V1h13v46H87V12H66L54 47H43L31 12H12v35H0z" />
      <path d="M0 49h12v48H0zM43 49h12v48H43zM87 49h51v48h-12V61H98v36H87z" />
    </svg>
    <div className="ml-4 flex flex-1 flex-col">
      <p className="mt-1 whitespace-nowrap text-[34px] leading-[42px] text-[#262626]">中国煤化工</p>
      <div className="h-0.5 bg-[#dc3a33]" />
      <p className="flex justify-between font-['Open_Sans',sans-serif] text-[38px] leading-[46px] text-[#6a6a6a]">
        <span>C</span><span>N</span><span>M</span><span>H</span><span>G</span>
      </p>
    </div>
  </aside>
);

const Callout = () => (
  <div className="pointer-events-none absolute left-[361px] top-[148px] text-[#ec4a3f]">
    <svg width="124" height="78" fill="currentColor" aria-hidden="true" className="absolute left-0 top-0">
      <path d="m15 1 27 22-26 15z" /><path d="m29 27 23 45" stroke="currentColor" strokeWidth="9" strokeLinecap="round" />
    </svg>
    <p className="whitespace-nowrap pt-24 text-[31px] leading-[42px]">命令面板</p>
  </div>
);

const App: React.FC = () => (
  <div className="relative flex min-h-screen flex-col overflow-hidden border-b-4 border-l-2 border-r-[3px] border-[#666] bg-[#3a3a3a] font-['Noto_Sans','Noto_Sans_CJK_SC',sans-serif]">
    <Gradients />
    <div className="-ml-0.5 h-[3px] bg-gradient-to-b from-[#3f343c] to-[#b79a9f]" />
    <div className="relative -ml-0.5 border-[3px] border-[#c4605a]">
      <AppButton />
      <TitleBar />
      <RibbonTabs />
      <Ribbon />
    </div>
    <FileTabs />
    <Canvas />
    <CommandWindow />
    <footer className="flex h-7">
      <LayoutTabs />
      <StatusBar />
    </footer>
    <BrandMark />
    <Callout />
  </div>
);

export default App;
